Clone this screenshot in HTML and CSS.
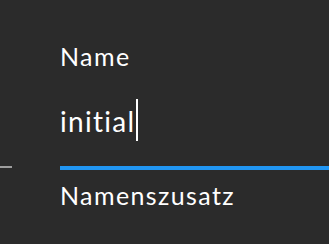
FILE: index.html
```html
<!DOCTYPE html>
<html lang="de">
<head>
    <meta charset="UTF-8">
    <meta name="viewport" content="width=device-width, initial-scale=1.0">
    <title>Name</title>
    <link rel="stylesheet" href="styles.css">
</head>
<body>
    <div class="form">
        <div class="field-row">
            <div class="side-rule"></div>
            <div class="field active">
                <label for="name">Name</label>
                <div class="value" id="name">initial<span class="caret"></span></div>
            </div>
        </div>
        <div class="field-row">
            <div></div>
            <div class="field">
                <label for="suffix">Namenszusatz</label>
            </div>
        </div>
    </div>
</body>
</html>
```

FILE: styles.css
```css
body {
    font-family: Lato, "Open Sans", sans-serif;
    background-color: #2b2b2b;
    color: #ffffff;
    margin: 0;
    padding: 0;
    height: 100vh;
    overflow: hidden;
}
.form {
    padding-top: 41px;
}
.field-row {
    display: grid;
    grid-template-columns: 12px 1fr;
    column-gap: 48px;
    align-items: end;
}
.side-rule {
    border-bottom: 2px solid #9e9e9e;
    margin-bottom: 2px;
}
.field label {
    display: block;
    font-size: 25px;
    line-height: 30px;
    letter-spacing: 1.4px;
}
.field.active {
    border-bottom: 4px solid #2196f3;
    padding-bottom: 25px;
}
.value {
    margin-top: 28px;
    font-size: 28px;
    line-height: 36px;
    letter-spacing: 1.3px;
}
.caret {
    display: inline-block;
    width: 2px;
    height: 42px;
    margin-left: 1px;
    background-color: #ffffff;
    vertical-align: -9px;
}
.field-row + .field-row .field {
    padding-top: 10px;
}
```
